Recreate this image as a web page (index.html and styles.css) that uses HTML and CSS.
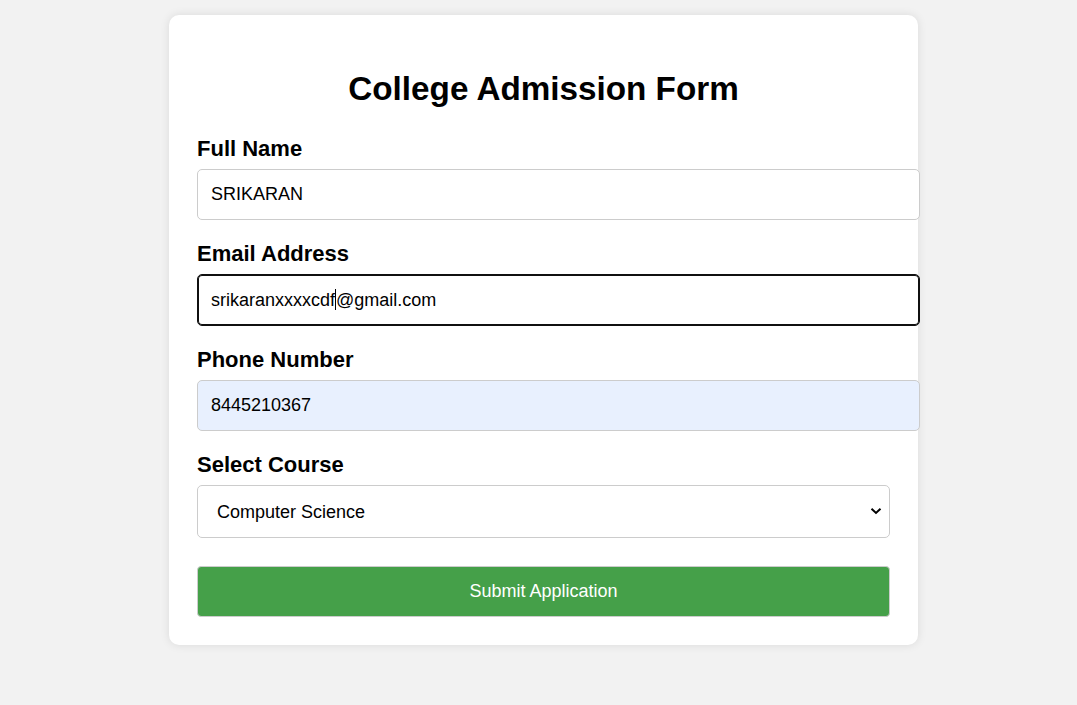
FILE: index.html
```html
<!DOCTYPE html>
<html lang="en">
<head>
<meta charset="utf-8">
<title>College Admission Form</title>
<link rel="stylesheet" href="styles.css">
</head>
<body>
<main class="card">
  <h2 class="title">College Admission Form</h2>
  <form class="form">
    <div class="group">
      <label class="label" for="name">Full Name</label>
      <input class="field" id="name" type="text" value="SRIKARAN">
    </div>
    <div class="group">
      <label class="label">Email Address</label>
      <div class="field field-focus">srikaranxxxxcdf<span class="caret"></span>@gmail.com</div>
    </div>
    <div class="group">
      <label class="label" for="phone">Phone Number</label>
      <input class="field field-autofill" id="phone" type="text" value="8445210367">
    </div>
    <div class="group group-last">
      <label class="label" for="course">Select Course</label>
      <div class="select-wrap">
        <select class="select" id="course">
          <option>Computer Science</option>
        </select>
        <svg class="chevron" width="12" height="8" viewBox="0 0 12 8" aria-hidden="true">
          <path d="M1.5 1.8 L6 6 L10.5 1.8" fill="none" stroke="#000" stroke-width="2"/>
        </svg>
      </div>
    </div>
    <button class="submit" type="button">Submit Application</button>
  </form>
</main>
</body>
</html>
```
FILE: styles.css
```css
html, body {
  margin: 0;
  padding: 0;
}
body {
  background: #f2f2f2;
  font-family: "Liberation Sans", Arial, sans-serif;
  color: #000;
  padding: 15px 0 0 10px;
  min-height: 705px;
  box-sizing: border-box;
}
.card {
  width: 693px;
  margin: 0 auto;
  padding: 28px;
  background: #fff;
  border-radius: 10px;
  box-shadow: 0 0 10px rgba(0, 0, 0, 0.1);
}
.title {
  font-size: 33.25px;
  font-weight: bold;
  text-align: center;
  margin: 27px 0 28px;
  line-height: 38px;
}
.form {
  display: flex;
  flex-direction: column;
}
.group {
  display: flex;
  flex-direction: column;
  margin-bottom: 21px;
}
.group-last {
  margin-bottom: 28px;
}
.label {
  font-size: 22px;
  font-weight: bold;
  line-height: 25px;
  margin-bottom: 8px;
}
.field {
  box-sizing: content-box;
  width: 100%;
  height: 21px;
  padding: 14px 15px 14px 13px;
  border: 1px solid #ccc;
  border-radius: 5px;
  font-family: "Liberation Sans", Arial, sans-serif;
  font-size: 18px;
  line-height: 21px;
  color: #000;
  background: #fff;
  margin: 0;
  outline: none;
}
.field-focus {
  height: 22px;
  line-height: 22px;
  border-color: #101010;
  box-shadow: inset 0 0 0 1px #101010;
  white-space: nowrap;
}
.caret {
  display: inline-block;
  width: 1px;
  height: 21px;
  background: #000;
  vertical-align: top;
}
.field-autofill {
  background: #e8f0fe;
}
.select-wrap {
  position: relative;
  display: flex;
}
.select {
  -webkit-appearance: none;
  appearance: none;
  width: 100%;
  height: 53px;
  padding: 0 40px 0 19px;
  border: 1px solid #ccc;
  border-radius: 5px;
  font-family: "Liberation Sans", Arial, sans-serif;
  font-size: 18px;
  color: #000;
  background: #fff;
}
.chevron {
  position: absolute;
  right: 8px;
  top: 22px;
  pointer-events: none;
}
.submit {
  width: 100%;
  height: 51px;
  border: 1px solid #ccc;
  border-radius: 4px;
  background: #45a049;
  color: #fff;
  font-family: "Liberation Sans", Arial, sans-serif;
  font-size: 18px;
  padding: 0;
}
```
